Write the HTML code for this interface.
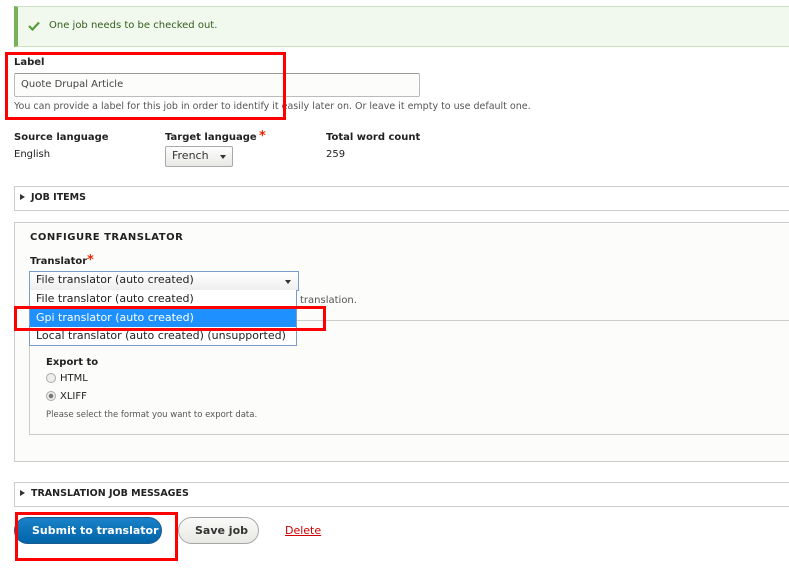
<!DOCTYPE html>
<html><head><style>
body{margin:0;width:789px;height:570px;overflow:hidden;background:#fff;font-family:"DejaVu Sans","Liberation Sans",sans-serif;color:#222;position:relative}
.a{position:absolute;white-space:nowrap}
.s{font-size:10px}
.b{font-weight:bold;font-size:10px;color:#222}
.red{position:absolute;border:3px solid #f00;box-sizing:border-box}
.box{position:absolute;border:1px solid #ccc;box-sizing:border-box}
.tri{display:inline-block;width:0;height:0;border-left:5px solid #333;border-top:3.5px solid transparent;border-bottom:3.5px solid transparent;margin-right:6px}
.ast{position:absolute;color:#e62600;font-size:13px;top:-3px}
</style></head><body>
<div class="a" style="left:14px;top:6px;width:790px;height:41px;background:#f1f8ee;border:1px solid #c9e1bd;border-left:4px solid #77b259;box-sizing:border-box"></div>
<svg class="a" style="left:28px;top:21px" width="12" height="10"><path d="M1 5 L4.5 8.5 L11 1.5" stroke="#5a9a3a" stroke-width="2.2" fill="none"/></svg>
<div class="a s" style="left:49px;top:20px;color:#325e1c">One job needs to be checked out.</div>

<div class="a b" style="left:14px;top:57px">Label</div>
<div class="a" style="left:14px;top:73px;width:406px;height:24px;border:1px solid #bbb;border-top-color:#999;border-radius:2px;background:#fcfcfa;box-sizing:border-box"></div>
<div class="a s" style="left:21px;top:79px;color:#444">Quote Drupal Article</div>
<div class="a" style="left:14px;top:101px;font-size:9.5px;color:#555">You can provide a label for this job in order to identify it easily later on. Or leave it empty to use default one.</div>
<div class="red" style="left:5px;top:52px;width:281px;height:68px"></div>

<div class="a b" style="left:14px;top:132px">Source language</div>
<div class="a s" style="left:14px;top:149px">English</div>
<div class="a b" style="left:165px;top:132px;width:100px">Target language<span class="ast" style="left:94px">*</span></div>
<div class="a" style="left:165px;top:146px;width:68px;height:21px;border:1px solid #aaa;border-radius:2px;background:linear-gradient(#fefefe,#e8e8e4);box-sizing:border-box"></div>
<div class="a" style="left:172px;top:149px;font-size:11px;color:#333">French</div>
<div class="a" style="left:220px;top:155px;border-top:4px solid #333;border-left:3.5px solid transparent;border-right:3.5px solid transparent"></div>
<div class="a b" style="left:326px;top:132px">Total word count</div>
<div class="a s" style="left:326px;top:149px">259</div>

<div class="box" style="left:14px;top:186px;width:790px;height:25px"></div>
<div class="a b" style="left:20px;top:192px;font-size:9.5px"><span class="tri"></span>JOB ITEMS</div>

<div class="box" style="left:14px;top:222px;width:790px;height:240px;background:#fcfcfa"></div>
<div class="a b" style="left:30px;top:232px;letter-spacing:0.5px">CONFIGURE TRANSLATOR</div>
<div class="a b" style="left:30px;top:256px;width:70px">Translator<span class="ast" style="left:57px">*</span></div>
<div class="box" style="left:29px;top:320px;width:770px;height:115px;background:#fcfcfa"></div>
<div class="a" style="left:29px;top:271px;width:270px;height:20px;border:1px solid #7a9ccc;background:linear-gradient(#fff,#eee);box-sizing:border-box"></div>
<div class="a" style="left:36px;top:273px;font-size:11px;color:#222">File translator (auto created)</div>
<div class="a" style="left:285px;top:280px;border-top:4px solid #333;border-left:3.5px solid transparent;border-right:3.5px solid transparent"></div>
<div class="a" style="left:29px;top:290px;width:268px;height:56px;border:1px solid #7a9ccc;border-top:none;background:#fff;box-sizing:border-box"></div>
<div class="a" style="left:30px;top:308px;width:266px;height:19px;background:#1e90ff"></div>
<div class="a" style="left:36px;top:292px;font-size:11px;color:#222">File translator (auto created)</div>
<div class="a" style="left:36px;top:311px;font-size:11px;color:#fff">Gpi translator (auto created)</div>
<div class="a" style="left:36px;top:329px;font-size:11px;color:#222">Local translator (auto created) (unsupported)</div>
<div class="a s" style="left:300px;top:295px;color:#555">translation.</div>
<div class="red" style="left:14px;top:306px;width:312px;height:25px"></div>

<div class="a b" style="left:46px;top:357px">Export to</div>
<div class="a" style="left:46px;top:373px;width:8px;height:8px;border:1px solid #aaa;border-radius:50%;background:#eee"></div>
<div class="a s" style="left:60px;top:373px">HTML</div>
<div class="a" style="left:46px;top:391px;width:8px;height:8px;border:1px solid #aaa;border-radius:50%;background:radial-gradient(#777 35%,#eee 45%)"></div>
<div class="a s" style="left:60px;top:391px">XLIFF</div>
<div class="a" style="left:46px;top:410px;font-size:8.5px;color:#555">Please select the format you want to export data.</div>

<div class="box" style="left:14px;top:482px;width:790px;height:25px"></div>
<div class="a b" style="left:20px;top:488px;font-size:9.5px"><span class="tri"></span>TRANSLATION JOB MESSAGES</div>

<div class="a" style="left:14px;top:517px;width:148px;height:27px;border-radius:14px;background:linear-gradient(#1a82c9,#0064a8);border:1px solid #1e5c90;box-sizing:border-box"></div>
<div class="a" style="left:32px;top:524px;font-size:11px;font-weight:bold;color:#fff">Submit to translator</div>
<div class="a" style="left:178px;top:517px;width:81px;height:27px;border-radius:14px;background:linear-gradient(#fafaf8,#e8e8e4);border:1px solid #a6a6a6;box-sizing:border-box"></div>
<div class="a" style="left:195px;top:524px;font-size:11px;font-weight:bold;color:#333">Save job</div>
<div class="a" style="left:285px;top:524px;font-size:11px;color:#c00;text-decoration:underline">Delete</div>
<div class="red" style="left:15px;top:512px;width:163px;height:49px"></div>
</body></html>
